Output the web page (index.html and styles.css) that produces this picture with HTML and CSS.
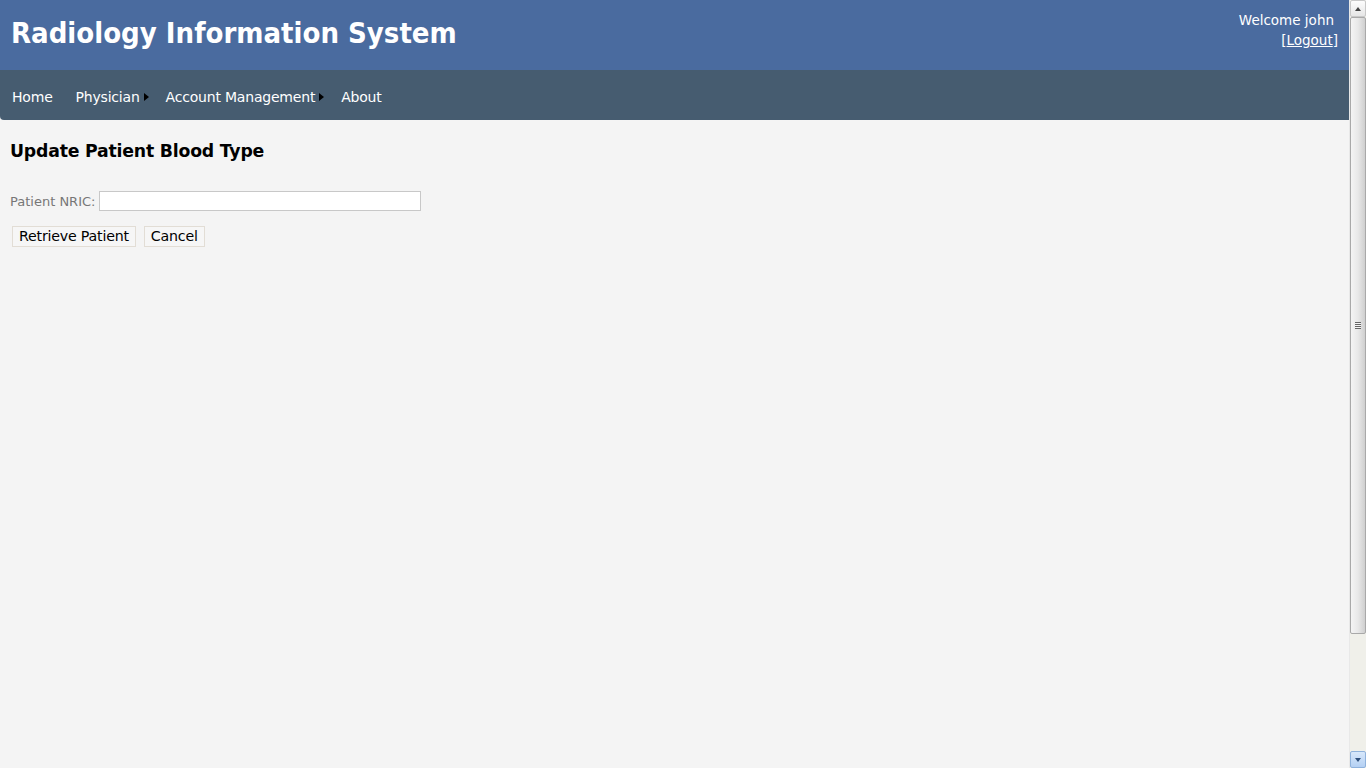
FILE: index.html
```html
<!DOCTYPE html>
<html>
<head>
<meta charset="utf-8">
<title>Radiology Information System</title>
<link rel="stylesheet" href="styles.css">
</head>
<body>
<div class="page">
  <header class="header">
    <h1 class="title">Radiology Information System</h1>
    <div class="login">
      <div class="welcome">Welcome john</div>
      <div class="logout">[<a href="#">Logout</a>]</div>
    </div>
  </header>
  <nav class="nav">
    <a class="nav-item" href="#">Home</a>
    <a class="nav-item has-sub" href="#">Physician<span class="arrow"></span></a>
    <a class="nav-item has-sub" href="#">Account Management<span class="arrow"></span></a>
    <a class="nav-item" href="#">About</a>
  </nav>
  <main class="main">
    <h2 class="heading">Update Patient Blood Type</h2>
    <div class="field">
      <label class="label" for="nric">Patient NRIC:</label>
      <input class="input" id="nric" type="text">
    </div>
    <div class="buttons">
      <button class="btn">Retrieve Patient</button>
      <button class="btn">Cancel</button>
    </div>
  </main>
</div>
<div class="scrollbar">
  <div class="sb-btn sb-up"><span class="tri-up"></span></div>
  <div class="sb-track">
    <div class="sb-thumb"><span class="grip"></span></div>
    <div class="sb-rest"></div>
  </div>
  <div class="sb-btn sb-down"><span class="tri-down"></span></div>
</div>
</body>
</html>
```

FILE: styles.css
```css
html, body {
  margin: 0;
  padding: 0;
  height: 100%;
  overflow: hidden;
}
body {
  display: flex;
  font-family: "DejaVu Sans", Verdana, sans-serif;
  background: #f4f4f4;
}
.page {
  flex: 1;
  display: flex;
  flex-direction: column;
  min-width: 0;
}
.header {
  height: 70px;
  background: #4a6b9f;
  display: flex;
  justify-content: space-between;
  color: #fff;
}
.title {
  margin: 0;
  padding: 13px 0 0 11px;
  font-family: "DejaVu Sans Condensed", "DejaVu Sans", sans-serif;
  font-size: 29px;
  font-weight: bold;
  line-height: 40px;
}
.login {
  padding: 10px 11px 0 0;
  text-align: right;
  font-size: 13.5px;
  line-height: 20px;
}
.welcome { padding-right: 4px; }
.logout a { color: #fff; }
.nav {
  height: 50px;
  box-sizing: border-box;
  padding-top: 4px;
  background: #465c70;
  display: flex;
  align-items: center;
  padding-left: 12px;
  border-bottom-left-radius: 4px;
}
.nav-item {
  color: #fff;
  text-decoration: none;
  font-size: 14px;
  margin-right: 23px;
  display: flex;
  align-items: center;
  letter-spacing: -0.2px;
}
.nav-item.has-sub { margin-right: 17px; }
.arrow {
  width: 0;
  height: 0;
  border-top: 4.5px solid transparent;
  border-bottom: 4.5px solid transparent;
  border-left: 5px solid #000;
  margin-left: 4px;
}
.main {
  flex: 1;
  padding: 0 10px;
  background: #f4f4f4;
}
.heading {
  margin: 19px 0 0;
  font-size: 17.3px;
  font-weight: bold;
  line-height: 24px;
  color: #000;
  letter-spacing: -0.2px;
}
.field {
  margin-top: 28px;
  display: flex;
  align-items: center;
}
.label {
  color: #777;
  font-size: 13px;
  margin-right: 4px;
}
.input {
  width: 322px;
  height: 20px;
  box-sizing: border-box;
  border: 1px solid #c8c8c8;
  background: #fff;
  padding: 0 3px;
  margin: 0;
}
.buttons {
  margin-top: 15px;
  display: flex;
  gap: 8px;
  padding-left: 2px;
}
.btn {
  font-family: "DejaVu Sans", Verdana, sans-serif;
  font-size: 14.2px;
  height: 21px;
  padding: 0 6px;
  background: #f6f6f6;
  border: 1px solid #e2ddd5;
  color: #000;
  letter-spacing: -0.2px;
  line-height: 19px;
}
.scrollbar {
  width: 17px;
  display: flex;
  flex-direction: column;
  background: #f0f0ea;
  border-left: 1px solid #e8e8e8;
  box-sizing: border-box;
}
.sb-btn {
  height: 17px;
  display: flex;
  align-items: center;
  justify-content: center;
  box-sizing: border-box;
}
.sb-up {
  background: linear-gradient(#fdfdfd, #e6e6e6);
  border: 1px solid #c8c8c8;
  border-radius: 2px;
}
.sb-down {
  background: linear-gradient(#d8e8fb, #b4d0f3);
  border: 1px solid #8fb2dc;
  border-radius: 2px;
}
.tri-up {
  width: 0; height: 0;
  border-left: 3px solid transparent;
  border-right: 3px solid transparent;
  border-bottom: 4px solid #444;
}
.tri-down {
  width: 0; height: 0;
  border-left: 3px solid transparent;
  border-right: 3px solid transparent;
  border-top: 4px solid #2e4f7c;
}
.sb-track {
  flex: 1;
  display: flex;
  flex-direction: column;
}
.sb-thumb {
  height: 617px;
  box-sizing: border-box;
  border: 1px solid #a9a9a9;
  border-radius: 2px;
  background: linear-gradient(90deg, #f4f4f4, #e8e8e8 50%, #cfcfcf);
  display: flex;
  align-items: center;
  justify-content: center;
}
.grip {
  width: 6px;
  height: 5px;
  border-top: 1px solid #666;
  border-bottom: 1px solid #666;
  background: linear-gradient(#f4f4f4 0 1px, #666 1px 2px, #f4f4f4 2px 3px, #666 3px 4px, #f4f4f4 4px);
  box-sizing: content-box;
}
.sb-rest { flex: 1; }
```
